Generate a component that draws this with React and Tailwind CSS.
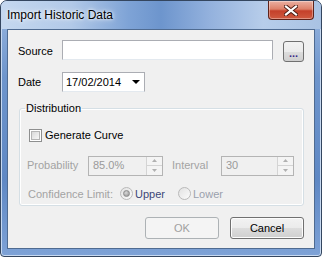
import React from 'react';

const ui = { fontFamily: '"Liberation Sans", Arial, sans-serif' };

function Spin({ value, width }) {
    return (
        <div className={`flex h-[20px] ${width} border border-[#b4b4b4] bg-[#f0f0f0]`}>
            <div className="flex flex-1 items-center pl-[4px] text-[11px] text-[#9a9a9a]">{value}</div>
            <div className="flex w-[16px] flex-col border-l border-[#d4d4d4]">
                <div className="flex flex-1 items-center justify-center border-b border-[#d4d4d4] bg-[#f4f4f4]">
                    <svg width="5" height="3" viewBox="0 0 5 3"><path d="M0 3L2.5 0L5 3Z" fill="#b0b0b0" /></svg>
                </div>
                <div className="flex flex-1 items-center justify-center bg-[#f4f4f4]">
                    <svg width="5" height="3" viewBox="0 0 5 3"><path d="M0 0L2.5 3L5 0Z" fill="#b0b0b0" /></svg>
                </div>
            </div>
        </div>
    );
}

function Radio({ checked, label, labelClass }) {
    return (
        <div className="flex items-center gap-[2px]">
            <div className="flex h-[13px] w-[13px] items-center justify-center rounded-full border border-[#b9b9b9] bg-[linear-gradient(135deg,#e2e2e2,#fbfbfb)]">
                {checked && <div className="h-[7px] w-[7px] rounded-full border border-[#8c8c8c] bg-[radial-gradient(circle_at_40%_35%,#d8d8d8,#8e8e8e)]" />}
            </div>
            <span className={`text-[11px] ${labelClass}`}>{label}</span>
        </div>
    );
}

export default function App() {
    return (
        <div style={ui} className="flex h-[257px] w-[322px] flex-col rounded-t-[7px] rounded-b-[4px] border border-[#34465f] bg-[linear-gradient(180deg,#9bb8e0_0%,#6e95cc_30%,#5f88c4_70%,#7ea2d6_100%)] shadow-[inset_0_0_0_1px_#c7d9f1]">
            {/* Title bar */}
            <div className="flex h-[28px] shrink-0 items-start justify-between rounded-t-[6px] bg-[linear-gradient(90deg,#c5d8ef_0%,#b2c9e8_22%,#7ea3d6_40%,#6d95cd_50%,#93b1dd_65%,#b7cdea_82%,#a9c2e3_100%)] pl-[6px] pr-[7px]">
                <span className="mt-[7px] text-[12px] leading-[14px] text-black [text-shadow:0_0_6px_#ffffff,0_0_3px_#ffffff]">Import Historic Data</span>
                <div className="flex h-[19px] w-[46px] items-center justify-center rounded-b-[4px] border border-t-0 border-[#5e2219] bg-[linear-gradient(180deg,#eab0a2_0%,#dd8069_45%,#c4402a_55%,#cf5a40_100%)] shadow-[inset_0_0_0_1px_rgba(255,255,255,0.35)]">
                    <svg width="14" height="11" viewBox="0 0 14 11">
                        <path d="M2 1.5L12 9.5M12 1.5L2 9.5" stroke="#4a1a12" strokeWidth="4" strokeLinecap="square" />
                        <path d="M2 1.5L12 9.5M12 1.5L2 9.5" stroke="#ffffff" strokeWidth="2.2" strokeLinecap="square" />
                    </svg>
                </div>
            </div>

            {/* Client area */}
            <div className="mx-[6px] mb-[7px] flex flex-1 flex-col border border-[#4f6b91] bg-[#f0f0f0] text-[11px]">
                {/* Source */}
                <div className="mt-[10px] flex h-[21px] items-start pl-[10px]">
                    <span className="mt-[3px] w-[44px] text-black">Source</span>
                    <div className="h-[20px] w-[211px] border border-[#abadb3] border-b-[#e3e9ef] bg-white" />
                    <button className="ml-[10px] mt-[1px] flex h-[21px] w-[21px] items-end justify-center rounded-[3px] border border-[#707070] bg-[linear-gradient(180deg,#f2f2f2_0%,#ebebeb_50%,#dddddd_51%,#cfcfcf_100%)] pb-[3px] text-[11px] leading-[10px] font-bold tracking-[0px] text-[#3a2a8a]">
                        ...
                    </button>
                </div>

                {/* Date */}
                <div className="mt-[11px] flex items-center pl-[10px]">
                    <span className="w-[44px] text-black">Date</span>
                    <div className="flex h-[20px] w-[83px] items-center justify-between border border-[#abadb3] border-b-[#e3e9ef] bg-white pl-[3px] pr-[4px]">
                        <span className="text-black">17/02/2014</span>
                        <svg width="8" height="4" viewBox="0 0 8 4"><path d="M0 0H8L4 4Z" fill="#000" /></svg>
                    </div>
                </div>

                {/* Distribution group */}
                <fieldset className="mx-[11px] mt-[10px] h-[104px] w-[285px] rounded-[3px] border border-[#d5dfe5] shadow-[inset_0_0_0_1px_#ffffff]">
                    <legend className="ml-[5px] px-[1px] text-[11px] leading-[13px] text-black">Distribution</legend>

                    <div className="ml-[9px] mt-[12px] flex items-center gap-[3px]">
                        <div className="flex h-[13px] w-[13px] items-center justify-center border border-[#8e8f8f] bg-white">
                            <div className="h-[9px] w-[9px] border border-[#b5b5b5] bg-[linear-gradient(135deg,#d9d9d9,#f7f7f7)]" />
                        </div>
                        <span className="text-black">Generate Curve</span>
                    </div>

                    <div className="ml-[7px] mt-[12px] flex items-center">
                        <span className="w-[61px] text-[#a3a3a3]">Probability</span>
                        <Spin value="85.0%" width="w-[75px]" />
                        <span className="ml-[9px] w-[49px] text-[#a3a3a3]">Interval</span>
                        <Spin value="30" width="w-[73px]" />
                    </div>

                    <div className="ml-[8px] mt-[10px] flex items-center">
                        <span className="w-[92px] text-[#a3a3a3]">Confidence Limit:</span>
                        <Radio checked label="Upper" labelClass="text-[#3c4777]" />
                        <div className="ml-[13px]">
                            <Radio label="Lower" labelClass="text-[#9aa0ad]" />
                        </div>
                    </div>
                </fieldset>

                {/* Buttons */}
                <div className="mr-[10px] mt-[11px] flex justify-end gap-[11px]">
                    <button className="h-[22px] w-[74px] rounded-[3px] border border-[#adb2b5] bg-[#f4f4f4] text-[11px] text-[#a0a0a0]">OK</button>
                    <button className="h-[22px] w-[74px] rounded-[3px] border border-[#707070] bg-[linear-gradient(180deg,#f2f2f2_0%,#ebebeb_50%,#dddddd_51%,#cfcfcf_100%)] text-[11px] text-black shadow-[inset_0_0_0_1px_#fcfcfc]">Cancel</button>
                </div>
            </div>
        </div>
    );
}
